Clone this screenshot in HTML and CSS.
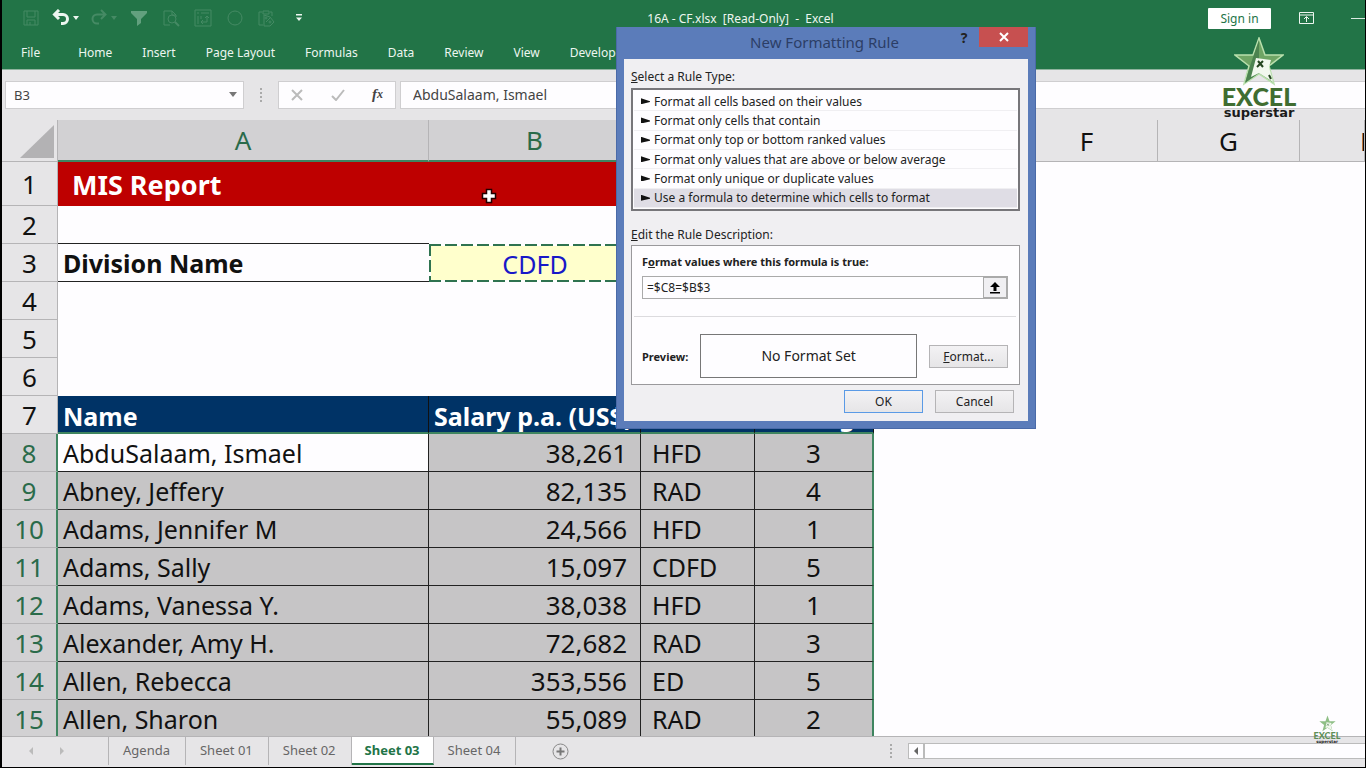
FILE: index.html
```html
<!DOCTYPE html>
<html lang="en">
<head>
    <meta charset="UTF-8">
    <meta name="viewport" content="width=device-width, initial-scale=1.0">
    <title>16A - CF.xlsx - Excel</title>
    <link rel="stylesheet" href="styles.css">
</head>
<body>
    <header class="ribbon">
        <div class="title-bar">
            <div class="quick-access">
                <button class="qa-btn dim" aria-label="Save">
                    <svg width="18" height="18" viewBox="0 0 18 18"><path d="M2 2h14v14H2zM5 2v6h8V2M5 16v-5h8v5M8 16v-3"/></svg>
                </button>
                <button class="qa-btn split" aria-label="Undo">
                    <svg width="18" height="18" viewBox="0 0 18 18"><path class="heavy" d="M7 1L2.500 5.500L7 10M3 5.500h8a4 4 0 0 1 0 9H9"/></svg>
                    <svg width="6" height="4" viewBox="0 0 6 4"><path class="solid" d="M0 0h6L3 4z"/></svg>
                </button>
                <button class="qa-btn split dim" aria-label="Redo">
                    <svg width="18" height="18" viewBox="0 0 18 18"><path class="thick" d="M11 1L15.500 5.500L11 10M15 5.500H7a4 4 0 0 0 0 9h2"/></svg>
                    <svg width="6" height="4" viewBox="0 0 6 4"><path class="solid" d="M0 0h6L3 4z"/></svg>
                </button>
                <button class="qa-btn mid" aria-label="Filter">
                    <svg width="18" height="18" viewBox="0 0 18 18"><path class="solid" d="M1 2h16v2l-6 6v4l-4 3v-7L1 4z"/></svg>
                </button>
                <button class="qa-btn dim" aria-label="Print Preview">
                    <svg width="18" height="18" viewBox="0 0 18 18"><path d="M8 16H2V2h8l4 4v2M10 2v4h4"/><circle cx="10" cy="10" r="4"/><path class="thick" d="M13 13l4 4"/></svg>
                </button>
                <button class="qa-btn dim" aria-label="Pivot Table">
                    <svg width="18" height="18" viewBox="0 0 18 18"><path d="M1 1h16v16H1zM3 4h2M7 4h8M4 7v8M7 13h6V7M9 11l-2 2 2 2M11 9l2-2 2 2M7 7v3"/></svg>
                </button>
                <button class="qa-btn dim" aria-label="Record">
                    <svg width="18" height="18" viewBox="0 0 18 18"><circle cx="9" cy="9" r="7"/></svg>
                </button>
                <button class="qa-btn dim" aria-label="Paste Special">
                    <svg width="18" height="18" viewBox="0 0 18 18"><path d="M4 3H1v13h4M5 2h6v3H5zM12 3h2v4M6 6v11h6l4-4-4-5zM8 13l4-4"/><circle cx="8" cy="9" r="1"/><circle cx="12" cy="13" r="1"/></svg>
                </button>
                <button class="qa-btn" aria-label="Customize">
                    <svg width="8" height="8" viewBox="0 0 8 8"><path class="solid" d="M1 0h6v1.500H1zM1 3.500h6L4 7z"/></svg>
                </button>
            </div>
            <div class="file-name">16A - CF.xlsx&nbsp; [Read-Only]&nbsp; -&nbsp; Excel</div>
            <div class="window-tools">
                <button class="sign-in">Sign in</button>
                <button class="qa-btn" aria-label="Ribbon Display Options">
                    <svg width="15" height="12" viewBox="0 0 15 12"><path d="M.5.500h14v11H.5zM.5 3h14M7.500 10V5M5 7l2.500-2.500L10 7"/></svg>
                </button>
                <button class="minimize" aria-label="Minimize"></button>
            </div>
        </div>
        <nav class="ribbon-tabs">
            <a href="#" class="file-tab">File</a>
            <a href="#">Home</a>
            <a href="#">Insert</a>
            <a href="#">Page Layout</a>
            <a href="#">Formulas</a>
            <a href="#">Data</a>
            <a href="#">Review</a>
            <a href="#">View</a>
            <a href="#">Developer</a>
        </nav>
    </header>

    <div class="formula-bar">
        <div class="name-box">
            <input type="text" value="B3" aria-label="Name Box">
            <svg width="8" height="5" viewBox="0 0 8 5"><path d="M0 0h8L4 5z" fill="#777"/></svg>
        </div>
        <span class="dots"></span>
        <div class="formula-tools">
            <button aria-label="Cancel entry"><svg width="12" height="12" viewBox="0 0 12 12"><path d="M1 1l10 10M11 1L1 11" stroke="#bbb" stroke-width="2"/></svg></button>
            <button aria-label="Enter"><svg width="14" height="12" viewBox="0 0 14 12"><path d="M1 7l4 4 8-10" fill="none" stroke="#bbb" stroke-width="2"/></svg></button>
            <button class="fx" aria-label="Insert Function">f<sub>x</sub></button>
        </div>
        <input class="formula" type="text" value="AbduSalaam, Ismael" aria-label="Formula">
    </div>

    <main class="sheet">
        <table class="grid">
            <colgroup>
                <col class="w-row"><col class="w-a"><col class="w-b"><col class="w-c"><col class="w-d"><col class="w-e"><col class="w-e"><col class="w-e"><col>
            </colgroup>
            <thead>
                <tr>
                    <th class="corner"><svg width="34" height="33" viewBox="0 0 34 33"><path d="M34 0v33H0z" fill="#b3b2b4"/></svg></th>
                    <th class="on">A</th><th class="on">B</th><th class="on">C</th><th class="on">D</th><th>E</th><th>F</th><th>G</th><th class="last">H</th>
                </tr>
            </thead>
            <tbody>
                <tr class="report"><th>1</th><td colspan="4">MIS Report</td><td></td><td></td><td></td><td></td></tr>
                <tr><th>2</th><td class="line"></td><td></td><td></td><td></td><td></td><td></td><td></td><td></td></tr>
                <tr><th>3</th><td class="line">Division Name</td><td class="copied">CDFD</td><td></td><td></td><td></td><td></td><td></td><td></td></tr>
                <tr><th>4</th><td></td><td></td><td></td><td></td><td></td><td></td><td></td><td></td></tr>
                <tr><th>5</th><td></td><td></td><td></td><td></td><td></td><td></td><td></td><td></td></tr>
                <tr><th>6</th><td></td><td></td><td></td><td></td><td></td><td></td><td></td><td></td></tr>
                <tr class="heading"><th>7</th><td>Name</td><td>Salary p.a. (US$)</td><td>Division</td><td class="center">Rating</td></tr>
                <tr class="data"><th>8</th><td class="active">AbduSalaam, Ismael</td><td>38,261</td><td>HFD</td><td>3</td></tr>
                <tr class="data"><th>9</th><td>Abney, Jeffery</td><td>82,135</td><td>RAD</td><td>4</td></tr>
                <tr class="data"><th>10</th><td>Adams, Jennifer M</td><td>24,566</td><td>HFD</td><td>1</td></tr>
                <tr class="data"><th>11</th><td>Adams, Sally</td><td>15,097</td><td>CDFD</td><td>5</td></tr>
                <tr class="data"><th>12</th><td>Adams, Vanessa Y.</td><td>38,038</td><td>HFD</td><td>1</td></tr>
                <tr class="data"><th>13</th><td>Alexander, Amy H.</td><td>72,682</td><td>RAD</td><td>3</td></tr>
                <tr class="data"><th>14</th><td>Allen, Rebecca</td><td>353,556</td><td>ED</td><td>5</td></tr>
                <tr class="data"><th>15</th><td>Allen, Sharon</td><td>55,089</td><td>RAD</td><td>2</td></tr>
            </tbody>
        </table>
    </main>

    <footer class="sheet-bar">
        <div class="sheet-nav">
            <button aria-label="Previous sheet"><svg width="4" height="8" viewBox="0 0 4 8"><path d="M4 0v8L0 4z" fill="#bbb"/></svg></button>
            <button aria-label="Next sheet"><svg width="4" height="8" viewBox="0 0 4 8"><path d="M0 0v8l4-4z" fill="#bbb"/></svg></button>
        </div>
        <nav class="sheet-tabs">
            <a href="#">Agenda</a>
            <a href="#">Sheet 01</a>
            <a href="#">Sheet 02</a>
            <a href="#" class="current">Sheet 03</a>
            <a href="#">Sheet 04</a>
        </nav>
        <button class="add-sheet" aria-label="New sheet">
            <svg width="17" height="17" viewBox="0 0 17 17"><circle cx="8.500" cy="8.500" r="7.500" fill="none" stroke="#888"/><path d="M8.500 4.500v8M4.500 8.500h8" stroke="#777" stroke-width="2"/></svg>
        </button>
        <div class="scroll-area">
            <span class="dots"></span>
            <div class="scrollbar">
                <button aria-label="Scroll left"><svg width="4" height="8" viewBox="0 0 4 8"><path d="M4 0v8L0 4z" fill="#666"/></svg></button>
            </div>
        </div>
    </footer>

    <svg class="pointer" width="16" height="16" viewBox="0 0 16 16"><path d="M5.500 1.500h5v4h4v5h-4v4h-5v-4h-4v-5h4z" fill="#fff" stroke="#200" stroke-width="1.500"/></svg>

    <div class="logo">
        <svg viewBox="0 0 50 49">
            <path d="M25 1l6 17h18L35 29l5 18-15-10-15 10 5-18L1 18h18z" fill="#6fa565" stroke="#b9dfad" stroke-width="1.500"/>
            <path d="M25 3v33L11 46l5-17z" fill="#4c8350"/>
            <path d="M22 21l15 2-2 7 4 15-14-9-8 4z" fill="#f2f8ee"/>
            <path d="M24 24l5 6M29 24l-6 6M35 38l2 4" stroke="#24451f" stroke-width="2"/>
        </svg>
        <strong>EXCEL</strong>
        <span>superstar</span>
    </div>

    <div class="logo small">
        <svg viewBox="0 0 50 49">
            <path d="M25 1l6 17h18L35 29l5 18-15-10-15 10 5-18L1 18h18z" fill="#8fbf86"/>
            <path d="M22 21l15 2-3 7 5 15-14-9-6 2z" fill="#f2f8ee"/>
            <path d="M24 25l5 6M29 25l-6 6" stroke="#4c8350" stroke-width="2"/>
        </svg>
        <strong>EXCEL</strong>
        <span>superstar</span>
    </div>

    <form class="dialog" role="dialog" aria-labelledby="dialog-title">
        <div class="dialog-head">
            <h1 id="dialog-title">New Formatting Rule</h1>
            <button type="button" class="help" aria-label="Help">?</button>
            <button type="button" class="close" aria-label="Close"><svg width="10" height="10" viewBox="0 0 10 10"><path d="M1 1l8 8M9 1L1 9" stroke="#fff" stroke-width="2"/></svg></button>
        </div>
        <div class="dialog-body">
            <div class="caption" id="rule-type"><u>S</u>elect a Rule Type:</div>
            <div class="rule-list" role="radiogroup" aria-labelledby="rule-type">
                <label><input type="radio" name="rule">Format all cells based on their values</label>
                <label><input type="radio" name="rule">Format only cells that contain</label>
                <label><input type="radio" name="rule">Format only top or bottom ranked values</label>
                <label><input type="radio" name="rule">Format only values that are above or below average</label>
                <label><input type="radio" name="rule">Format only unique or duplicate values</label>
                <label class="selected"><input type="radio" name="rule" checked>Use a formula to determine which cells to format</label>
            </div>
            <div class="caption edit"><u>E</u>dit the Rule Description:</div>
            <div class="description">
                <label class="bold" for="rule-formula">F<u>o</u>rmat values where this formula is true:</label>
                <div class="formula-row">
                    <input type="text" id="rule-formula" value="=$C8=$B$3">
                    <button type="button" aria-label="Collapse dialog"><svg width="10" height="12" viewBox="0 0 10 12"><path d="M5 0l5 5H6.500v4h-3V5H0zM0 10h10v1.500H0z"/></svg></button>
                </div>
                <hr>
                <div class="preview-row">
                    <span class="bold">Preview:</span>
                    <div class="preview">No Format Set</div>
                    <button type="button" class="btn"><span><u>F</u>ormat...</span></button>
                </div>
            </div>
            <div class="actions">
                <button type="button" class="btn primary">OK</button>
                <button type="button" class="btn">Cancel</button>
            </div>
        </div>
    </form>
</body>
</html>
```

FILE: styles.css
```css
* {
    box-sizing: border-box;
}

body {
    margin: 0;
    height: 100vh;
    display: flex;
    flex-direction: column;
    overflow: hidden;
    position: relative;
    border: solid #000;
    border-width: 0 1px 1px 2px;
    background: #fefdff;
    font-family: "Noto Sans", "Open Sans", sans-serif;
    font-size: 12px;
    color: #111;
}

button {
    padding: 0;
    border: 0;
    background: none;
    font: inherit;
    color: inherit;
    display: flex;
    align-items: center;
    justify-content: center;
}

input {
    font: inherit;
    color: inherit;
    border: 0;
    margin: 0;
    min-width: 0;
}

a {
    color: inherit;
    text-decoration: none;
}

/* ribbon */
.ribbon {
    height: 70px;
    background: #227447;
    border-bottom: 1px solid #8fb39e;
    color: #edf6f0;
    flex: none;
}

.title-bar {
    display: flex;
    align-items: center;
    height: 36px;
    overflow: hidden;
}

.quick-access {
    display: flex;
    gap: 9px;
    padding-left: 17px;
}

.qa-btn {
    width: 23px;
    height: 18px;
}

.qa-btn svg {
    fill: none;
    stroke: currentColor;
}

.qa-btn .solid {
    fill: currentColor;
    stroke: none;
}

.qa-btn .thick {
    stroke-width: 2;
}

.qa-btn .heavy {
    stroke-width: 3;
}

.split {
    width: 29px;
    gap: 3px;
}

.dim {
    color: #458a64;
}

.mid {
    color: #62a07e;
}

.file-name {
    flex: 1;
    text-align: center;
    padding-right: 37px;
    white-space: nowrap;
}

.window-tools {
    display: flex;
    align-items: center;
    gap: 24px;
}

.sign-in {
    width: 63px;
    height: 21px;
    background: #fff;
    color: #227447;
    border-radius: 1px;
}

.minimize {
    width: 14px;
    height: 1px;
    margin-left: 9px;
    background: #dcebe2;
}

.ribbon-tabs {
    display: flex;
    gap: 30px;
    padding-left: 19px;
    line-height: 34px;
    white-space: nowrap;
}

.file-tab {
    margin-right: 8px;
}

/* formula bar */
.formula-bar {
    display: flex;
    align-items: center;
    height: 50px;
    padding: 0 0 1px 3px;
    background: #e6e5e7;
    flex: none;
    font-size: 13px;
    color: #444;
}

.name-box,
.formula-tools,
.formula {
    height: 28px;
    background: #fefdff;
    border: 1px solid #cfced0;
}

.name-box {
    display: flex;
    align-items: center;
    width: 239px;
    padding: 0 6px;
}

.name-box input {
    flex: 1;
    background: none;
}

.dots {
    width: 2px;
    height: 14px;
    background: repeating-linear-gradient(#aaa 0 2px, transparent 2px 4px);
    margin: 0 16px;
}

.formula-tools {
    display: flex;
    align-items: center;
    justify-content: space-between;
    width: 118px;
    padding: 0 12px;
    margin-right: 4px;
}

.fx {
    font: italic bold 15px "Liberation Serif", serif;
}

.fx sub {
    font-size: 12px;
}

.formula {
    flex: 1;
    padding: 0 12px;
    border-right: 0;
    font-size: 14px;
}

/* worksheet */
.sheet {
    flex: 1;
    min-height: 0;
    overflow: hidden;
}

.grid {
    width: 100%;
    table-layout: fixed;
    border-collapse: separate;
    border-spacing: 0;
    font-size: 25px;
    line-height: 30px;
}

.w-row { width: 56px; }
.w-a { width: 371px; }
.w-b { width: 212px; }
.w-c { width: 114px; }
.w-d { width: 119px; }
.w-e { width: 142px; }

.grid th,
.grid td {
    height: 38px;
    padding: 1px 5px 0;
    text-align: left;
    white-space: nowrap;
    overflow: hidden;
}

.grid th {
    padding: 0;
    background: #e6e5e7;
    border: solid #b5b4b6;
    border-width: 0 1px 1px 0;
    font-size: 26px;
    font-weight: normal;
    text-align: center;
}

.grid thead th {
    height: 42px;
}

.grid thead .on {
    background: #d2d1d3;
    color: #2a6b4a;
    border-bottom: 2px solid #3f8560;
}

.grid .corner {
    padding: 2px 3px 0 0;
}

.corner svg {
    display: block;
    margin-left: auto;
}

.grid thead .last {
    text-align: left;
    padding-left: 60px;
}

.report th,
.grid .report td {
    height: 44px;
}

.report td:nth-child(2) {
    background: #be0000;
    color: #fff;
    font-size: 27px;
    font-weight: bold;
    padding-left: 14px;
}

.grid .line {
    border-bottom: 1px solid #222;
    font-weight: bold;
}

.grid .copied {
    color: #1818c8;
    text-align: center;
    background:
        repeating-linear-gradient(90deg, #2f7350 0 12px, #fff 12px 16px) 0 0 / 100% 2px no-repeat,
        repeating-linear-gradient(90deg, #2f7350 0 12px, #fff 12px 16px) 0 100% / 100% 2px no-repeat,
        repeating-linear-gradient(#2f7350 0 12px, #fff 12px 16px) 0 0 / 2px 100% no-repeat,
        #ffffcc;
}

.grid .heading td {
    background: #003366;
    color: #fff;
    font-weight: bold;
    padding-top: 4px;
    border-right: 1px solid #111;
    border-bottom: 2px solid #3f8560;
}

.grid .center {
    text-align: center;
}

.grid .data th {
    background: #d2d1d3;
    color: #2a6b4a;
    border-right: 2px solid #3f8560;
}

.data td {
    background: #c6c5c6;
    border: solid #222;
    border-width: 0 1px 1px 0;
}

.data .active {
    background: #fefdff;
}

.grid .data td:nth-child(3) {
    font-size: 26px;
    text-align: right;
    padding-right: 13px;
}

.grid .data td:nth-child(4) {
    padding-left: 11px;
}

.grid .data td:nth-child(5) {
    font-size: 26px;
    text-align: center;
    border-right: 2px solid #3f8560;
}

/* sheet tabs */
.sheet-bar {
    display: flex;
    align-items: flex-start;
    height: 31px;
    background: #e6e5e7;
    border-top: 1px solid #b5b4b6;
    flex: none;
    font-size: 13px;
    color: #666;
}

.sheet-nav {
    display: flex;
    gap: 27px;
    width: 106px;
    height: 28px;
    padding-left: 27px;
}

.sheet-tabs {
    display: flex;
    line-height: 26px;
    white-space: nowrap;
    border-left: 1px solid #b5b4b6;
}

.sheet-tabs a {
    padding: 0 15px 0 14px;
    border-right: 1px solid #b5b4b6;
}

.sheet-tabs .current {
    background: #fff;
    color: #227447;
    font-weight: bold;
    border-bottom: 2px solid #227447;
    padding: 0 13px;
}

.add-sheet {
    width: 17px;
    height: 28px;
    margin-left: 36px;
}

.scroll-area {
    display: flex;
    align-items: center;
    width: 36%;
    height: 28px;
    margin-left: auto;
}

.scrollbar {
    flex: 1;
    height: 16px;
    background: #fefdff;
    border: solid #bbb;
    border-width: 1px 0 1px 1px;
}

.scrollbar button {
    width: 16px;
    height: 14px;
    border-right: 2px solid #bbb;
}

/* things lying over the sheet */
.pointer {
    position: absolute;
    left: 479px;
    top: 188px;
}

.logo {
    position: absolute;
    right: 64px;
    top: 37px;
    width: 84px;
    display: flex;
    flex-direction: column;
    align-items: center;
    font-family: "DejaVu Sans", sans-serif;
    font-size: 13px;
    line-height: 13px;
    font-weight: bold;
    color: #1b1b1b;
}

.logo svg {
    width: 50px;
    height: 49px;
}

.logo strong {
    font-family: Lato, sans-serif;
    font-size: 25px;
    line-height: 20px;
    color: #3f6d31;
}

.logo.small {
    right: 24px;
    top: 715px;
    width: 28px;
    font-size: 4px;
    line-height: 4px;
}

.small svg {
    width: 17px;
    height: 17px;
}

.small strong {
    font-size: 9px;
    line-height: 8px;
    color: #5f8f58;
}

/* dialog */
.dialog {
    position: absolute;
    left: 614px;
    top: 27px;
    width: 420px;
    padding: 0 7px 7px;
    background: #5b7cba;
    border: 1px solid #4a6aa8;
    border-top: 0;
    color: #222;
}

.dialog-head {
    display: flex;
    align-items: flex-start;
    height: 32px;
}

.dialog-head h1 {
    flex: 1;
    margin: 0;
    padding-left: 76px;
    text-align: center;
    font-size: 15px;
    font-weight: normal;
    line-height: 30px;
    color: #2c3e66;
}

.help {
    width: 30px;
    height: 20px;
    font-size: 14px;
    font-weight: bold;
}

.close {
    width: 49px;
    height: 20px;
    background: #c75050;
}

.dialog-body {
    padding: 8px 8px 8px 7px;
    background: #f0eff2;
}

.caption {
    line-height: 20px;
}

.edit {
    margin-top: 14px;
}

.rule-list {
    display: flex;
    flex-direction: column;
    height: 123px;
    margin-top: 1px;
    padding: 2px 1px 1px;
    background: #fefdff;
    border: 2px solid #77767a;
}

.rule-list label {
    flex: 1;
    display: flex;
    align-items: center;
    gap: 4px;
    padding-left: 7px;
    border-bottom: 1px solid #f0eff2;
}

.rule-list .selected {
    background: #dfdde5;
}

.rule-list input {
    appearance: none;
    width: 9px;
    height: 6px;
    background: #111;
    clip-path: polygon(0 0, 100% 50%, 100% 65%, 0 100%);
}

.description {
    height: 140px;
    padding: 6px 11px 6px 10px;
    background: #fefdff;
    border: 1px solid #9a999c;
}

.bold {
    font-weight: bold;
    font-size: 11px;
}

.description label {
    display: block;
    line-height: 20px;
}

.formula-row {
    display: flex;
    height: 23px;
    margin-top: 4px;
    border: 1px solid #aaa;
}

.formula-row input {
    flex: 1;
    padding: 0 4px;
    background: none;
}

.formula-row button {
    width: 24px;
    background: #f0eff2;
    border: 1px solid #aaa;
}

.description hr {
    margin: 17px -8px;
    border: 0;
    border-top: 1px solid #dcdbde;
}

.preview-row {
    display: flex;
    align-items: center;
    justify-content: space-between;
}

.preview {
    width: 217px;
    height: 44px;
    line-height: 42px;
    text-align: center;
    font-size: 14px;
    border: 1px solid #777;
}

.btn {
    width: 79px;
    height: 23px;
    background: linear-gradient(#f3f2f4, #e6e5e7);
    border: 1px solid #b5b4b6;
}

.primary {
    border-color: #5a9ae6;
}

.actions {
    display: flex;
    justify-content: flex-end;
    gap: 12px;
    padding: 5px 6px 0 0;
}
```
